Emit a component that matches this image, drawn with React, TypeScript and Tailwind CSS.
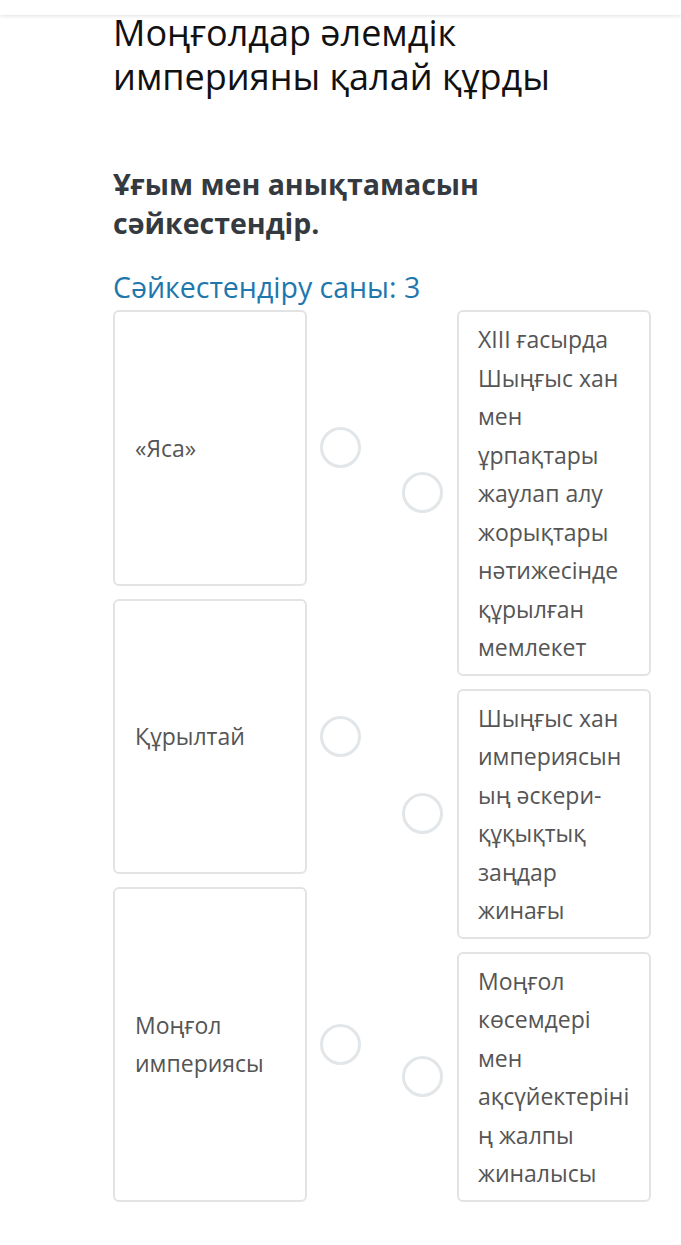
import React from 'react';

const leftItems = ['«Яса»', 'Құрылтай', 'Моңғол империясы'];

const rightItems = [
    'XIII ғасырда Шыңғыс хан мен ұрпақтары жаулап алу жорықтары нәтижесінде құрылған мемлекет',
    'Шыңғыс хан империясының әскери-құқықтық заңдар жинағы',
    'Моңғол көсемдері мен ақсүйектерінің жалпы жиналысы',
];

const Circle: React.FC = () => (
    <div className="w-[41px] h-[41px] shrink-0 rounded-full border-[3px] border-[#e2e6e9] bg-white" />
);

const App: React.FC = () => {
    return (
        <div className="min-h-[1245px] bg-white" style={{ fontFamily: '"Open Sans", "Noto Sans", sans-serif' }}>
            <div className="h-[15px] bg-white shadow-[0_1px_4px_rgba(0,0,0,0.12)]" />
            <div className="pl-[113px] pr-[30px]">
                <h1 className="text-[36px] leading-[44px] text-[#111] font-normal mt-[-4px]">
                    Моңғолдар әлемдік империяны қалай құрды
                </h1>
                <h2 className="mt-[66px] text-[28.5px] leading-[39px] font-bold text-[#343a40] w-[420px]">
                    Ұғым мен анықтамасын сәйкестендір.
                </h2>
                <p className="mt-[26px] text-[28.5px] leading-[36px] text-[#1e77ad]">Сәйкестендіру саны: 3</p>
                <div className="flex mt-[5px] w-[538px] justify-between">
                    <div className="flex flex-col gap-[13px]">
                        {leftItems.map((t) => (
                            <div key={t} className="grow flex items-center">
                                <div className="self-stretch w-[194px] flex items-center rounded-md border-2 border-[#e3e3e3] px-[20px] text-[23px] leading-[38.5px] text-[#555]">
                                    {t}
                                </div>
                                <div className="ml-[13px]"><Circle /></div>
                            </div>
                        ))}
                    </div>
                    <div className="flex flex-col gap-[13px]">
                        {rightItems.map((t) => (
                            <div key={t} className="flex items-center">
                                <Circle />
                                <div className="ml-[14px] w-[194px] rounded-md border-2 border-[#e3e3e3] pl-[19px] pr-[14px] pt-[8px] pb-[7px] text-[23px] leading-[38.5px] text-[#555] break-words">
                                    {t}
                                </div>
                            </div>
                        ))}
                    </div>
                </div>
            </div>
        </div>
    );
};

export default App;
